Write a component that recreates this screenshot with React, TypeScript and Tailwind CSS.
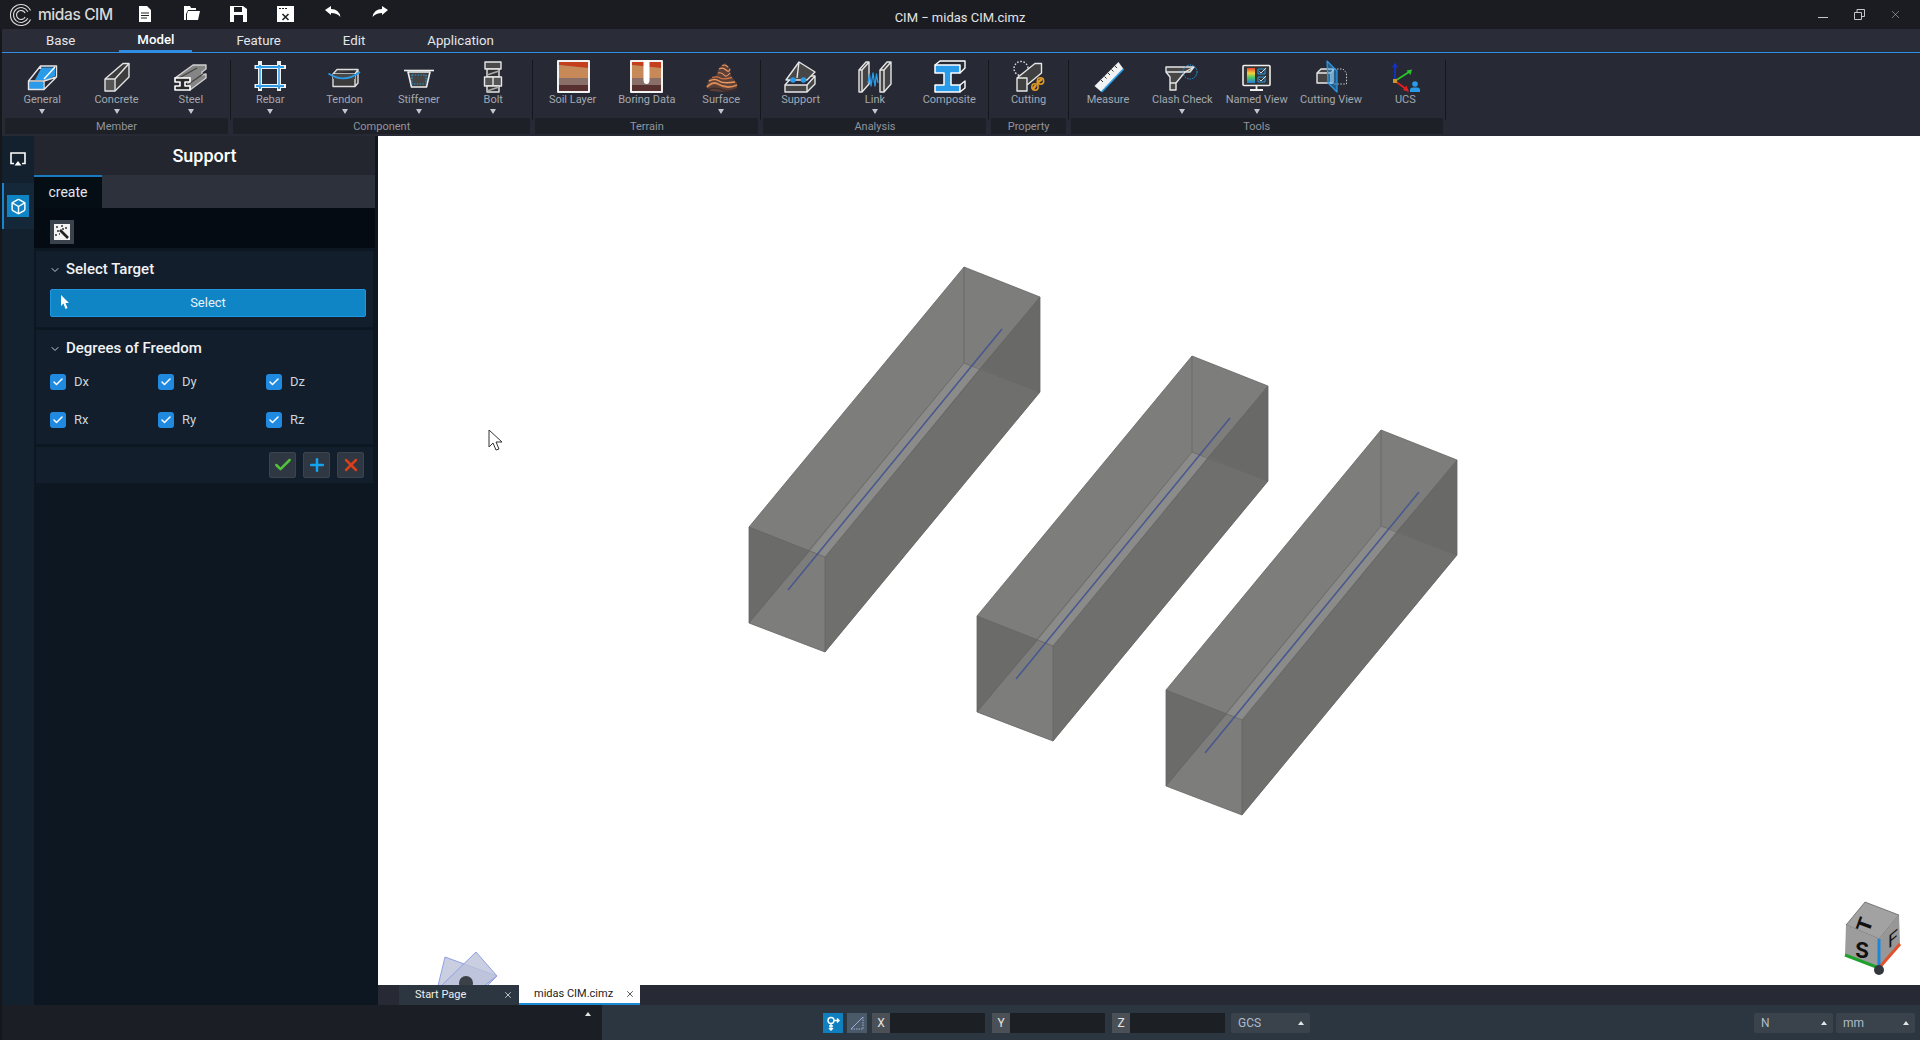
import type { ReactNode } from 'react';
import { Box, Check, ChevronDown, Plus, X } from 'lucide-react';

const FONT = { fontFamily: 'Roboto, "Liberation Sans", sans-serif' };
const BLUE = '#2a9be8';
const W = '#e6e6e6';

function Ico({ children }: { children: ReactNode }) {
  return (
    <svg width="36" height="34" viewBox="0 0 36 34" fill="none" stroke={W} strokeWidth="1.4" strokeLinejoin="round">
      {children}
    </svg>
  );
}

const ICONS: Record<string, ReactNode> = {
  General: (
    <Ico>
      <path d="M17.5 8.5H31V17L22 21H11Z" fill={BLUE} stroke="none" />
      <rect x="5" y="23" width="14" height="7" fill={BLUE} stroke="none" />
      <path d="M4.5 22 16.5 7H32.5V18L20 30.5H4.5ZM4.5 22H20V30.5M20 22 32.5 18M16.5 7V10" />
      <path d="M20 20 31 8" stroke="#fff" />
    </Ico>
  ),
  Concrete: (
    <Ico>
      <path d="M6 20 24 4.5H30V18L16 32H6Z" fill="#3d3d3d" />
      <path d="M6 20H16V32M16 20 30 4.5" />
      <rect x="7" y="21" width="8" height="10" fill="#555" stroke="none" />
    </Ico>
  ),
  Steel: (
    <Ico>
      <path d="M2 19 20 6H33V10L29 13V16L33 15V19L17 31 15 25 17 19Z" fill="#858585" stroke="#cfcfcf" />
      <path d="M6 19 24 9M13 27 30 15" stroke="#444" />
      <path d="M2 19H17V23H12V27H17V31H2V27H7V23H2Z" fill="#2a2a2a" stroke="#fff" strokeWidth="1.6" />
    </Ico>
  ),
  Rebar: (
    <Ico>
      <path d="M8 2V32M27 2V32M2.5 8H34M2.5 27H34" stroke="#f0f0f0" strokeWidth="4" />
      <path d="M8 6V30M27 6V30M4 8H32M4 27H32" stroke={BLUE} strokeWidth="2" />
      <path d="M8 8V27M27 8V27" stroke="#fff" strokeWidth="0.5" />
    </Ico>
  ),
  Tendon: (
    <Ico>
      <path d="M6 15 10 10.5H31L28 15H6ZM6 15V27.5H28L31 24V10.5M28 15V27.5" fill="#3b3b3b" stroke="#ddd" />
      <path d="M6 15H28V20H6Z" fill="#484848" stroke="none" />
      <path d="M1.5 14.5Q17 25 33 13" stroke={BLUE} strokeWidth="1.6" />
    </Ico>
  ),
  Stiffener: (
    <Ico>
      <path d="M3 11.5H33" stroke="#f0f0f0" strokeWidth="1.6" />
      <path d="M7 13 29 13 25.5 28H10.5Z" fill="#404040" stroke="#eee" strokeWidth="1.6" />
      <rect x="11" y="16" width="14" height="9" fill="#444" stroke={BLUE} strokeWidth="1.2" strokeDasharray="1.4 1.4" />
    </Ico>
  ),
  Bolt: (
    <Ico>
      <rect x="10" y="3" width="16" height="7" fill="#4a4a4a" />
      <rect x="12" y="10" width="12" height="8" fill="#333" />
      <path d="M12 16 24 12" stroke="#aaa" />
      <rect x="9.5" y="18" width="17" height="9" fill="#555" />
      <path d="M18 18V27" />
      <rect x="12" y="27" width="12" height="6" fill="#333" />
      <path d="M12 32 24 28" stroke="#aaa" />
    </Ico>
  ),
  'Soil Layer': (
    <Ico>
      <rect x="3" y="2" width="31" height="31" fill="#8a6f68" stroke="#f2f2f2" strokeWidth="2" />
      <path d="M4 3H33V9L4 6Z" fill="#c63f1d" stroke="none" />
      <path d="M4 6 33 9V19H4Z" fill="#c78958" stroke="none" />
      <path d="M4 26H33V32H4Z" fill="#58302f" stroke="none" />
    </Ico>
  ),
  'Boring Data': (
    <Ico>
      <rect x="2" y="2" width="31" height="31" fill="#8a6f68" stroke="#f2f2f2" strokeWidth="2" />
      <path d="M3 3H32V9L3 6Z" fill="#c63f1d" stroke="none" />
      <path d="M3 6 32 9V19H3Z" fill="#c78958" stroke="none" />
      <path d="M3 26H32V32H3Z" fill="#58302f" stroke="none" />
      <path d="M14.5 1V21Q14.5 25 17.5 25 20.5 25 20.5 21V1Z" fill="#fff" stroke="none" />
    </Ico>
  ),
  Surface: (
    <Ico>
      <path d="M3 28 6 20 13 17 16 9 22 4 27 9 28 17 34 24V29L21 33 8 32Z" fill="#5c4038" stroke="none" />
      <path d="M4 28Q10 22 15 25T25 28 34 26" stroke="#d98a55" strokeWidth="1.8" />
      <path d="M6 22Q12 19 16 22T32 23" stroke="#ee9a5c" strokeWidth="1.5" />
      <path d="M9 18.5Q14 17 17 19T29 18.5" stroke="#c9744a" strokeWidth="1.3" />
      <path d="M15 14Q19 13 21 16T27 14M16 10Q20 8 23 11T27 10M19 6.5Q22 5 25 8" stroke="#e89864" strokeWidth="1.2" />
      <path d="M5 30.5Q13 28 20 31T34 30" stroke="#3e2c2a" strokeWidth="1.5" />
    </Ico>
  ),
  Support: (
    <Ico>
      <path d="M2 26H24L32 17V25L24 33H2Z" fill="#454545" />
      <path d="M2 26V26L10 17H32M24 26V33" />
      <path d="M3 21 16 3 32 13 24 21Z" fill="#474747" />
      <path d="M16 3 14 19" />
      <circle cx="10" cy="21" r="2.8" fill={BLUE} stroke="none" />
      <circle cx="20.5" cy="21" r="2.8" fill={BLUE} stroke="none" />
    </Ico>
  ),
  Link: (
    <Ico>
      <path d="M2 11 9 3H12V25L5 33H2ZM2 11H5V33M5 11 12 3" fill="#444" />
      <path d="M23 11 30 3H34V25L27 33H23ZM23 11H27V33M27 11 34 3" fill="#444" />
      <path d="M11 24 12.5 15 14 27 16 14 18 27 19.5 15 21 24" stroke={BLUE} strokeWidth="1.3" />
    </Ico>
  ),
  Composite: (
    <Ico>
      <path d="M4 6H29V14H20V26H29V33H4V26H13V14H4Z" fill={BLUE} stroke="#fff" strokeWidth="1.5" />
      <path d="M4 6 9 2H34V9L29 14M29 26 34 22V29L29 33" stroke="#fff" />
    </Ico>
  ),
  Cutting: (
    <Ico>
      <circle cx="10" cy="9.5" r="7" stroke="#ddd" strokeDasharray="1.6 1.6" />
      <path d="M6 19 24 4.5H30.5V14L16 26V32H6ZM6 19H16V26" fill="#404040" />
      <path d="M22 30 25 26M26 24 31 20" stroke="#e29a22" strokeWidth="2.4" />
      <circle cx="24" cy="28" r="3.2" stroke="#e29a22" strokeWidth="1.5" />
      <circle cx="29.5" cy="22" r="3.2" stroke="#e29a22" strokeWidth="1.5" />
    </Ico>
  ),
  Measure: (
    <Ico>
      <path d="M4.5 27 28.5 3 33.5 10 11.5 33Z" fill="#f2f2f2" stroke="none" />
      <path d="M11.5 33 33.5 10" stroke={BLUE} strokeWidth="1.8" />
      <path d="M11 21 13 23M14.5 17.5 16.5 19.5M18 14 20 16M21.5 10.5 23.5 12.5M25 7 27 9" stroke="#333" strokeWidth="1" />
    </Ico>
  ),
  'Clash Check': (
    <Ico>
      <path d="M2 8H30L26 13H21L12 24V31H6V18L2 13Z" fill="#474747" />
      <path d="M2 13H21M12 24H6M21 13 30 8" />
      <circle cx="26" cy="13" r="7" stroke={BLUE} strokeWidth="1" strokeDasharray="1.5 1" />
    </Ico>
  ),
  'Named View': (
    <Ico>
      <defs>
        <linearGradient id="rb" x1="0" y1="0" x2="0" y2="1">
          <stop offset="0" stopColor="#e8452c" />
          <stop offset="0.35" stopColor="#f2d23a" />
          <stop offset="0.65" stopColor="#47c56a" />
          <stop offset="1" stopColor="#2a7ce0" />
        </linearGradient>
      </defs>
      <rect x="4" y="6.5" width="27" height="20" rx="1" fill="#333" stroke="#eee" strokeWidth="1.6" />
      <rect x="8" y="9" width="8" height="15" fill="url(#rb)" stroke="none" />
      <path d="M17.5 27V30M11 31H24" stroke="#eee" strokeWidth="1.8" />
      <path d="M19 10H26V15H19ZM19 18H26V23H19Z" stroke={BLUE} strokeWidth="1" />
      <path d="M20.5 12.5 22 14 27 9M20.5 20.5 22 22 27 17" stroke="#ddd" strokeWidth="1" />
    </Ico>
  ),
  'Cutting View': (
    <Ico>
      <path d="M4 14 8 10H20V24H4Z" fill="#444" />
      <path d="M4 14H18V25M18 14 21 10" />
      <path d="M21 10H30L33.5 14V25H21" stroke="#ccc" strokeWidth="1" strokeDasharray="1.5 1.5" />
      <path d="M14 2 24 12V33L15 24Z" fill={BLUE} fillOpacity="0.45" stroke={BLUE} strokeWidth="1.2" />
    </Ico>
  ),
  UCS: (
    <Ico>
      <path d="M8 22V7" stroke="#1432c8" strokeWidth="1.8" />
      <path d="M8 3.5 11 8.5H5Z" fill="#1432c8" stroke="none" />
      <path d="M8 22 22 13" stroke="#28c828" strokeWidth="1.8" />
      <path d="M25 10.5 23.5 16 19.5 11.5Z" fill="#28c828" stroke="none" />
      <path d="M8 22 19 30" stroke="#e01f1f" strokeWidth="1.8" />
      <path d="M22 33 16 31 19.5 26.5Z" fill="#e01f1f" stroke="none" />
      <rect x="6" y="20" width="4" height="4" fill="#c9962c" stroke="none" />
      <circle cx="28" cy="25" r="2.8" fill={BLUE} stroke="none" />
      <path d="M23 33V31Q23 28.5 26 28.5H30Q33 28.5 33 31V33Z" fill={BLUE} stroke="none" />
    </Ico>
  ),
};

const GROUPS = [
  { name: 'Member', items: [['General', 1], ['Concrete', 1], ['Steel', 1]] },
  { name: 'Component', items: [['Rebar', 1], ['Tendon', 1], ['Stiffener', 1], ['Bolt', 1]] },
  { name: 'Terrain', items: [['Soil Layer', 0], ['Boring Data', 0], ['Surface', 1]] },
  { name: 'Analysis', items: [['Support', 0], ['Link', 1], ['Composite', 0]] },
  { name: 'Property', items: [['Cutting', 0]] },
  { name: 'Tools', items: [['Measure', 0], ['Clash Check', 1], ['Named View', 1], ['Cutting View', 0], ['UCS', 0]] },
] as { name: string; items: [string, number][] }[];

const TABS = ['Base', 'Model', 'Feature', 'Edit', 'Application'];

function Caret() {
  return (
    <svg width="6" height="5" viewBox="0 0 6 5">
      <path d="M0 0H6L3 5Z" fill="#c4c8cc" />
    </svg>
  );
}

function UpCaret() {
  return (
    <svg width="6" height="4" viewBox="0 0 6 4">
      <path d="M0 4H6L3 0Z" fill="#e4e4e4" />
    </svg>
  );
}

function TitleBar() {
  return (
    <div className="h-[29px] shrink-0 grid grid-cols-[1fr_auto_1fr] items-center bg-[#1b1c21] text-white">
      <div className="flex items-center pl-[10px]">
        <svg width="23" height="24" viewBox="0 0 23 24" fill="none" stroke="#dcdcdc" strokeWidth="1.1">
          <path d="M20.5 7.6A10.5 10.5 0 1 0 20.5 16.4" />
          <path d="M17.8 8.8A7.5 7.5 0 1 0 17.8 15.2" />
          <path d="M15.1 10.1A4.5 4.5 0 1 0 15.1 13.9" />
        </svg>
        <span
          className="ml-[5px] w-[83px] shrink-0 whitespace-nowrap text-[15.5px] font-medium text-[#d8d8d8] tracking-[-0.4px]"
          style={{ fontFamily: 'Inter, sans-serif' }}
        >
          midas CIM
        </span>
        <div className="flex">
          <span className="w-[47px] flex justify-center">
            <svg width="14" height="17" viewBox="0 0 14 17">
              <path d="M1 0H9L13 4V16H1Z" fill="#fff" />
              <path d="M3 7H11M3 9.5H11M3 12H9" stroke="#222" />
            </svg>
          </span>
          <span className="w-[47px] flex justify-center">
            <svg width="18" height="15" viewBox="0 0 18 15">
              <path d="M1 0H7L8 2H13V4H5L3 8V14H1ZM5 5H17L15 14H4V8Z" fill="#fff" />
            </svg>
          </span>
          <span className="w-[47px] flex justify-center">
            <svg width="17" height="16" viewBox="0 0 17 16">
              <path d="M0 0H13L17 3V16H0Z" fill="#fff" />
              <rect x="4" y="1" width="8" height="5" fill="#1b1c21" />
              <rect x="4" y="9" width="9" height="7" fill="#1b1c21" />
            </svg>
          </span>
          <span className="w-[47px] flex justify-center">
            <svg width="17" height="16" viewBox="0 0 17 16">
              <rect width="17" height="16" fill="#fff" />
              <path d="M2 2.5H4M5 2.5H7M8 2.5H10" stroke="#222" />
              <path d="M5.5 8 11.5 14M11.5 8 5.5 14" stroke="#222" strokeWidth="1.6" />
            </svg>
          </span>
          <span className="w-[47px] flex justify-center">
            <svg width="16" height="11" viewBox="0 0 16 11">
              <path d="M0 4 6 0V3Q14 3 15.5 11 12 7 6 7V9Z" fill="#fff" />
            </svg>
          </span>
          <span className="w-[47px] flex justify-center">
            <svg width="16" height="11" viewBox="0 0 16 11">
              <path d="M16 4 10 0V3Q2 3 .5 11 4 7 10 7V9Z" fill="#fff" />
            </svg>
          </span>
        </div>
      </div>
      <div className="pt-[6px] text-[13px] leading-[18px] text-[#e4e4e4]">CIM − midas CIM.cimz</div>
      <div className="flex justify-end items-center pr-[7px] text-[#c4c7cc]">
        <span className="w-[36px] flex justify-center">
          <span className="block mt-[6px] w-[10px] h-px bg-[#c4c7cc]" />
        </span>
        <span className="w-[36px] flex justify-center">
          <svg width="11" height="11" viewBox="0 0 11 11" fill="none" stroke="#c4c7cc">
            <path d="M.5 3.5H7.5V10.5H.5ZM3 3V.5H10.5V7.5H8" />
          </svg>
        </span>
        <span className="w-[36px] flex justify-center">
          <X size={13} strokeWidth={1} />
        </span>
      </div>
    </div>
  );
}

function Ribbon() {
  return (
    <div className="h-[83px] flex pl-[3px] bg-[#272a35]">
      {GROUPS.map((g) => (
        <div key={g.name} className="flex">
          <div className="flex flex-col">
            <div className="h-[65px] flex">
              {g.items.map(([label, caret]) => (
                <div key={label} className="w-[74.35px] flex flex-col items-center pt-[6px]">
                  {ICONS[label]}
                  <span className="h-[12px] leading-[14px] text-[11px] text-[#a3a8b0] whitespace-nowrap">{label}</span>
                  {caret ? (
                    <span className="mt-[4px] block leading-none">
                      <Caret />
                    </span>
                  ) : null}
                </div>
              ))}
            </div>
            <div className="h-[16px] bg-[#1e2028] text-center text-[11px] leading-[17px] text-[#90959d]">{g.name}</div>
          </div>
          <div className="w-[5px] flex justify-center">
            <span className="block w-px h-[60px] mt-[7px] bg-[#15171c]" />
          </div>
        </div>
      ))}
    </div>
  );
}

function DofCheck({ label }: { label: string }) {
  return (
    <div className="w-[108px] h-[16px] shrink-0 flex items-center gap-[8px]">
      <span className="w-[16px] h-[16px] rounded-[3px] bg-[#1f8ae0] flex items-center justify-center">
        <Check size={12} strokeWidth={3} color="#fff" />
      </span>
      <span className="text-[13px] text-[#cfd4da]">{label}</span>
    </div>
  );
}

function SectionTitle({ children }: { children: ReactNode }) {
  return (
    <div className="h-[38px] flex items-center gap-[5px] pb-px">
      <ChevronDown size={12} color="#c4ccd4" strokeWidth={2} className="mt-px -ml-px" />
      <span className="text-[15px] font-medium text-[#f0f2f4]">{children}</span>
    </div>
  );
}

function SidePanel() {
  return (
    <div className="flex shrink-0">
      <div className="w-8 flex flex-col items-center bg-[#13202d]">
        <div className="h-[47px] w-full flex items-center justify-center pb-[2px]">
          <svg width="16" height="14" viewBox="0 0 16 14" fill="none">
            <path d="M4 11.5H1V1H15V11.5H12" stroke="#fff" strokeWidth="1.6" />
            <path d="M8 9 11.5 13.5H4.5Z" fill="#fff" />
          </svg>
        </div>
        <div className="h-[46px] w-full relative flex items-center justify-center bg-[#14283a]">
          <span className="absolute left-0 top-0 bottom-0 w-[2px] bg-[#1a84cc]" />
          <span className="w-[22px] h-[22px] bg-[#0f84c4] flex items-center justify-center">
            <Box size={17} color="#fff" strokeWidth={2} />
          </span>
        </div>
      </div>
      <div className="w-[344px] bg-[#0c1722] pr-[3px] flex flex-col">
        <div className="h-[39px] bg-[#23262f] flex items-center justify-center text-[18px] font-medium text-white">Support</div>
        <div className="h-[33px] bg-[#2d313b]">
          <div className="w-[68px] h-full bg-[#050d15] border-t-2 border-[#1a7ac0] flex items-center justify-center text-[14px] text-[#e4e8ec]">
            create
          </div>
        </div>
        <div className="h-[40px] bg-[#040b12] pl-[16px] pt-[12px]">
          <span className="w-[24px] h-[24px] bg-[#3a424b] flex items-center justify-center">
            <svg width="16" height="16" viewBox="0 0 16 16">
              <rect width="16" height="16" fill="#f2f2f2" />
              <path d="M6 6 14 14" stroke="#222" strokeWidth="2.6" />
              <path d="M2 3H4M3 7H5M7 2H9M11 4H13M1 11H3M5 10H6M8 5H10" stroke="#333" strokeWidth="1.5" />
            </svg>
          </span>
        </div>
        <div className="mx-[2px] mt-[3px] h-[76px] bg-[#131e2c] pl-[14px] pr-[7px]">
          <SectionTitle>Select Target</SectionTitle>
          <div className="relative h-[28px] rounded-[2px] bg-[#0f85c6] border border-[#1f96e0] flex items-center justify-center text-[13px] text-[#e8f2f8]">
            <svg width="10" height="15" viewBox="0 0 10 15" className="absolute left-[9px] top-[5px]">
              <path d="M1 0V11L3.5 8.5 5.5 14 7.5 13 5.5 8H9Z" fill="#fff" />
            </svg>
            Select
          </div>
        </div>
        <div className="mx-[2px] mt-[3px] h-[114px] bg-[#131e2c] pl-[14px]">
          <SectionTitle>Degrees of Freedom</SectionTitle>
          <div className="mt-[6px] flex">
            <DofCheck label="Dx" />
            <DofCheck label="Dy" />
            <DofCheck label="Dz" />
          </div>
          <div className="mt-[22px] flex">
            <DofCheck label="Rx" />
            <DofCheck label="Ry" />
            <DofCheck label="Rz" />
          </div>
        </div>
        <div className="mx-[2px] mt-[3px] h-[36px] bg-[#131e2c] flex items-center justify-end gap-[7px] pr-[9px]">
          <span className="w-[27px] h-[26px] rounded-[2px] bg-[#2f3842] border border-[#3a444f] flex items-center justify-center">
            <Check size={20} strokeWidth={3} color="#52c23a" />
          </span>
          <span className="w-[27px] h-[26px] rounded-[2px] bg-[#2f3842] border border-[#3a444f] flex items-center justify-center">
            <Plus size={20} strokeWidth={3} color="#12a4f0" />
          </span>
          <span className="w-[27px] h-[26px] rounded-[2px] bg-[#2f3842] border border-[#3a444f] flex items-center justify-center">
            <X size={20} strokeWidth={3} color="#d8401c" />
          </span>
        </div>
      </div>
    </div>
  );
}

// one translucent block, drawn at the first block's page coordinates
function Prism({ dx, dy }: { dx: number; dy: number }) {
  return (
    <g transform={`translate(${dx} ${dy})`}>
      <path d="M749 527 964 267 1040 297V392L825 652 749 623Z" fill="#7d7d7c" />
      <path d="M825 557 980 368 1040 392 825 652Z" fill="#6f6f6e" />
      <path d="M980 368 1040 297V392Z" fill="#696968" />
      <path d="M749 527 810 551 749 623Z" fill="#6b6b6a" />
      <path d="M810 551 825 557 980 368 964 363Z" fill="#8b8b89" />
      <g fill="none" stroke="#666" strokeWidth="0.8">
        <path d="M749 527 964 267 1040 297V392L825 652 749 623Z" />
        <path d="M749 527 825 557V652M825 557 1040 297M964 267V363L1040 392M749 623 964 363" />
      </g>
      <path d="M788 590 1002 329" stroke="#47578f" strokeWidth="1.5" />
    </g>
  );
}

function Viewport() {
  return (
    <div className="flex-1 min-h-0 bg-white">
      <svg className="block w-full h-full" viewBox="378 136 1542 849" style={FONT}>
        <Prism dx={0} dy={0} />
        <Prism dx={228} dy={89} />
        <Prism dx={417} dy={163} />
        {/* mouse pointer */}
        <path d="M489 430V447L493 443 496 450 499 449 496 442H502Z" fill="#fff" stroke="#333" strokeWidth="1" />
        {/* triad, cut off by the tab bar */}
        <g fill="#bcc2da" fillOpacity="0.8" stroke="#8fa0e0" strokeWidth="1">
          <path d="M445 957 497 976 478 995 437 990Z" />
          <path d="M476 952 497 976 472 995 437 990Z" />
        </g>
        <circle cx="466" cy="983" r="7" fill="#3c4048" />
        {/* view cube */}
        <path d="M1865 902 1899 915 1879 939 1846 925Z" fill="#a2a2a2" stroke="#444" strokeWidth="0.6" />
        <path d="M1846 925 1879 939V968L1845 955Z" fill="#9c9c9c" />
        <path d="M1879 939 1899 915 1900 944 1879 968Z" fill="#979797" />
        <text x="0" y="0" fontSize="22" fontWeight="700" fill="#111" textAnchor="middle" transform="translate(1871 927) rotate(-70) scale(1 .9) rotate(0)">T</text>
        <text x="1862" y="958" fontSize="22" fontWeight="700" fill="#111" textAnchor="middle">S</text>
        <text x="0" y="0" fontSize="18" fill="#111" textAnchor="middle" transform="translate(1893 945) skewY(-40)">F</text>
        <path d="M1845 955 1879 968" stroke="#1fa02f" strokeWidth="3" />
        <path d="M1879 939V968" stroke="#1a87d8" strokeWidth="3" />
        <path d="M1879 968 1900 944" stroke="#e0512c" strokeWidth="3" />
        <circle cx="1879" cy="970" r="5" fill="#33363d" />
      </svg>
    </div>
  );
}

function DocTabs() {
  return (
    <div className="h-[20px] flex pl-[21px] bg-[#272a35] text-[11px]">
      <div className="w-[120px] bg-[#2c3640] flex items-center justify-between pl-[16px] pr-[6px] text-[#eceff1]">
        Start Page
        <X size={10} strokeWidth={1.8} />
      </div>
      <div className="w-[121px] bg-white border-b-2 border-[#1a8ad4] flex items-center justify-between pl-[15px] pr-[5px] text-[#222]">
        midas CIM.cimz
        <X size={10} strokeWidth={1.8} />
      </div>
    </div>
  );
}

function Coord({ label }: { label: string }) {
  return (
    <div className="flex w-[113px] h-[20px]">
      <span className="w-[18px] bg-[#4a5056] flex items-center justify-center text-[12px] text-[#e4e4e4]">{label}</span>
      <span className="flex-1 bg-[#1c2024]" />
    </div>
  );
}

function Combo({ label, w }: { label: string; w: string }) {
  return (
    <div className={`${w} h-[20px] rounded-[2px] bg-[#3a424c] flex items-center justify-between pl-[7px] pr-[6px] text-[12px] text-[#aebccb]`}>
      {label}
      <UpCaret />
    </div>
  );
}

function StatusBar() {
  return (
    <div className="h-[35px] shrink-0 flex bg-[#2b3640]">
      <div className="w-[600px] bg-[#1c1e25] flex justify-end pr-[11px] pt-[7px]">
        <span className="block leading-none">
          <UpCaret />
        </span>
      </div>
      <div className="flex-1 flex items-center pl-[221px] pr-[5px]">
        <span className="w-[20px] h-[20px] bg-[#0f7fc0] flex items-center justify-center">
          <svg width="14" height="16" viewBox="0 0 14 16" fill="none" stroke="#fff" strokeWidth="1.4">
            <circle cx="5" cy="5.5" r="3" />
            <path d="M8 5.5H13M11 3.5 13 5.5 11 7.5M5 8.5V15M3 11H7M3 13 5 15 7 13" />
          </svg>
        </span>
        <span className="ml-[4px] w-[20px] h-[20px] bg-[#4a5a68] flex items-center justify-center">
          <svg width="14" height="14" viewBox="0 0 14 14" fill="none" stroke="#a7b8e4" strokeWidth="0.9">
            <path d="M1 13 13 1" />
            <path d="M1 13H13V1" strokeDasharray="1.5 1" />
          </svg>
        </span>
        <div className="ml-[5px] flex gap-[7px]">
          <Coord label="X" />
          <Coord label="Y" />
          <Coord label="Z" />
        </div>
        <div className="ml-[6px]">
          <Combo label="GCS" w="w-[79px]" />
        </div>
        <div className="flex-1" />
        <div className="flex gap-[3px]">
          <Combo label="N" w="w-[79px]" />
          <Combo label="mm" w="w-[79px]" />
        </div>
      </div>
    </div>
  );
}

export default function App() {
  return (
    <div className="w-[1920px] h-[1040px] overflow-hidden flex flex-col bg-[#15171b]" style={FONT}>
      <TitleBar />
      <div className="flex-1 min-h-0 flex flex-col border-l-2 border-[#15171b]">
        <div className="h-[24px] shrink-0 flex items-center pl-[13px] bg-[#2a2d38] border-b border-[#2f8de4]">
          {TABS.map((t) => (
            <span
              key={t}
              className={
                t === 'Model'
                  ? 'mx-[13px] px-[18px] pt-px h-full flex items-center text-[13.25px] font-medium text-white border-b-2 border-[#2f8de4]'
                  : 'mx-[13px] px-[18px] pt-px h-full flex items-center text-[13.25px] text-[#e4e6ea]'
              }
            >
              {t}
            </span>
          ))}
        </div>
        <Ribbon />
        <div className="flex-1 min-h-0 flex">
          <SidePanel />
          <div className="flex-1 min-w-0 flex flex-col">
            <Viewport />
            <DocTabs />
          </div>
        </div>
        <StatusBar />
      </div>
    </div>
  );
}
